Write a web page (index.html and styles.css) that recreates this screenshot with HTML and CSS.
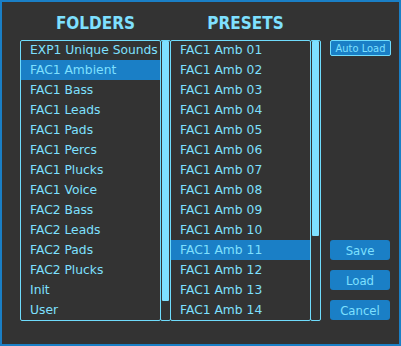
FILE: index.html
```html
<!DOCTYPE html>
<html lang="en">
<head>
    <meta charset="UTF-8">
    <meta name="viewport" content="width=device-width, initial-scale=1.0">
    <title>Preset Browser</title>
    <link rel="stylesheet" href="styles.css">
</head>
<body>
    <div class="window">
        <div class="column">
            <h2>FOLDERS</h2>
            <div class="panel">
                <ul class="list">
                    <li>EXP1 Unique Sounds</li>
                    <li class="selected">FAC1 Ambient</li>
                    <li>FAC1 Bass</li>
                    <li>FAC1 Leads</li>
                    <li>FAC1 Pads</li>
                    <li>FAC1 Percs</li>
                    <li>FAC1 Plucks</li>
                    <li>FAC1 Voice</li>
                    <li>FAC2 Bass</li>
                    <li>FAC2 Leads</li>
                    <li>FAC2 Pads</li>
                    <li>FAC2 Plucks</li>
                    <li>Init</li>
                    <li>User</li>
                </ul>
                <div class="scrollbar">
                    <div class="thumb" style="height: 260px"></div>
                </div>
            </div>
        </div>
        <div class="column presets">
            <h2>PRESETS</h2>
            <div class="panel">
                <ul class="list">
                    <li>FAC1 Amb 01</li>
                    <li>FAC1 Amb 02</li>
                    <li>FAC1 Amb 03</li>
                    <li>FAC1 Amb 04</li>
                    <li>FAC1 Amb 05</li>
                    <li>FAC1 Amb 06</li>
                    <li>FAC1 Amb 07</li>
                    <li>FAC1 Amb 08</li>
                    <li>FAC1 Amb 09</li>
                    <li>FAC1 Amb 10</li>
                    <li class="selected">FAC1 Amb 11</li>
                    <li>FAC1 Amb 12</li>
                    <li>FAC1 Amb 13</li>
                    <li>FAC1 Amb 14</li>
                </ul>
                <div class="scrollbar">
                    <div class="thumb" style="height: 195px"></div>
                </div>
            </div>
        </div>
        <div class="actions">
            <button class="toggle">Auto Load</button>
            <div class="spacer"></div>
            <button class="btn">Save</button>
            <button class="btn">Load</button>
            <button class="btn">Cancel</button>
        </div>
    </div>
</body>
</html>
```
FILE: styles.css
```css
body {
    margin: 0;
    background-color: #333;
    font-family: "DejaVu Sans", sans-serif;
}
.window {
    box-sizing: border-box;
    width: 401px;
    height: 346px;
    border: 2px solid #1a7fc6;
    background-color: #333;
    padding: 0 0 0 18px;
    display: flex;
    color: #7ee0ff;
}
.column {
    display: flex;
    flex-direction: column;
}
.presets {
    margin-left: -1px;
}
h2 {
    margin: 0;
    height: 38px;
    box-sizing: border-box;
    padding-top: 11px;
    line-height: 20px;
    font-family: "DejaVu Sans Condensed", "DejaVu Sans", sans-serif;
    font-size: 17px;
    font-weight: bold;
    text-align: center;
    color: #7ee0ff;
}
.panel {
    display: flex;
    height: 281px;
}
.list {
    box-sizing: border-box;
    width: 141px;
    height: 281px;
    margin: 0;
    padding: 0;
    list-style: none;
    border: 1px solid #6fdcfc;
    border-radius: 2px;
    overflow: hidden;
}
.list li {
    height: 20px;
    line-height: 21px;
    padding-left: 9px;
    font-size: 12.3px;
    white-space: nowrap;
}
.list li:first-child {
    margin-top: -1px;
}
.list .selected {
    background-color: #1a7fc6;
}
.scrollbar {
    box-sizing: border-box;
    width: 11px;
    height: 281px;
    margin-left: -1px;
    padding: 0 1px;
    border: 1px solid #6fdcfc;
    border-radius: 2px;
}
.thumb {
    background-color: #7ee0ff;
    border-radius: 1px;
}
.actions {
    display: flex;
    flex-direction: column;
    width: 61px;
    margin-left: 9px;
    padding-top: 38px;
}
.actions button {
    font-family: "DejaVu Sans Condensed", "DejaVu Sans", sans-serif;
    color: #7ee0ff;
    background-color: #1a7fc6;
    padding: 0;
    cursor: pointer;
}
.toggle {
    height: 16px;
    font-size: 11px;
    border: 1px solid #6fdcfc;
    border-radius: 2px;
}
.spacer {
    height: 184px;
}
.btn {
    width: 60px;
    height: 20px;
    margin-bottom: 10px;
    font-size: 13px;
    border: none;
    border-radius: 3px;
}
```
